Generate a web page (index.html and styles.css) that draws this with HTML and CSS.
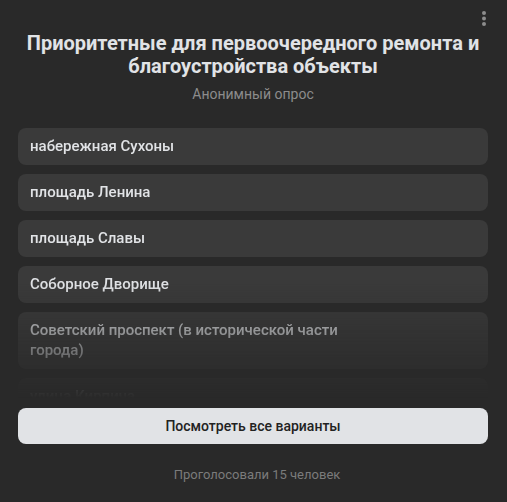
FILE: index.html
```html
<!DOCTYPE html>
<html lang="ru">
<head>
<meta charset="utf-8">
<link rel="stylesheet" href="styles.css">
</head>
<body>
<div class="poll">
  <button class="menu" aria-label="Меню">
    <svg width="4" height="16" viewBox="0 0 4 16"><circle cx="2" cy="2" r="2"/><circle cx="2" cy="7.5" r="2"/><circle cx="2" cy="13" r="2"/></svg>
  </button>
  <h1 class="title">Приоритетные для первоочередного ремонта и благоустройства объекты</h1>
  <div class="subtitle">Анонимный опрос</div>
  <div class="options">
    <div class="option">набережная Сухоны</div>
    <div class="option">площадь Ленина</div>
    <div class="option">площадь Славы</div>
    <div class="option">Соборное Дворище</div>
    <div class="option">Советский проспект (в исторической части<br>города)</div>
    <div class="option">улица Кирпича</div>
  </div>
  <button class="all">Посмотреть все варианты</button>
  <div class="footer">Проголосовали 15 человек</div>
</div>
</body>
</html>
```
FILE: styles.css
```css
html, body {
  margin: 0;
  padding: 0;
  background: #292929;
}
body {
  font-family: Roboto, "Noto Sans", sans-serif;
  color: #e1e3e6;
}
.poll {
  position: relative;
  padding: 32px 19px 0 18px;
  display: flex;
  flex-direction: column;
}
.menu {
  position: absolute;
  top: 11px;
  right: 21px;
  padding: 0;
  border: 0;
  background: none;
  fill: #8c8c8c;
  display: flex;
}
.title {
  margin: 0;
  font-size: 20px;
  line-height: 23px;
  font-weight: 700;
  text-align: center;
  color: #e1e3e6;
}
.subtitle {
  margin-top: 7px;
  font-size: 14px;
  line-height: 18px;
  color: #8c8c8c;
  text-align: center;
}
.options {
  margin-top: 25px;
  height: 270px;
  overflow: hidden;
  display: flex;
  flex-direction: column;
  gap: 9px;
  -webkit-mask-image: linear-gradient(to bottom, #000 calc(100% - 115px), transparent 100%);
  mask-image: linear-gradient(to bottom, #000 calc(100% - 115px), transparent 100%);
}
.option {
  flex: none;
  background: #3a3a3a;
  border-radius: 8px;
  padding: 8px 12px 9px;
  font-size: 15px;
  line-height: 20px;
  font-weight: 500;
  color: #e1e3e6;
}
.all {
  margin-top: 10px;
  height: 36px;
  border: 0;
  border-radius: 8px;
  background: #e1e3e6;
  color: #222222;
  font-family: inherit;
  font-size: 14px;
  font-weight: 500;
  padding: 0;
}
.footer {
  margin-top: 22px;
  padding-left: 8px;
  font-size: 13px;
  line-height: 18px;
  color: #7b7b7b;
  text-align: center;
}
```
